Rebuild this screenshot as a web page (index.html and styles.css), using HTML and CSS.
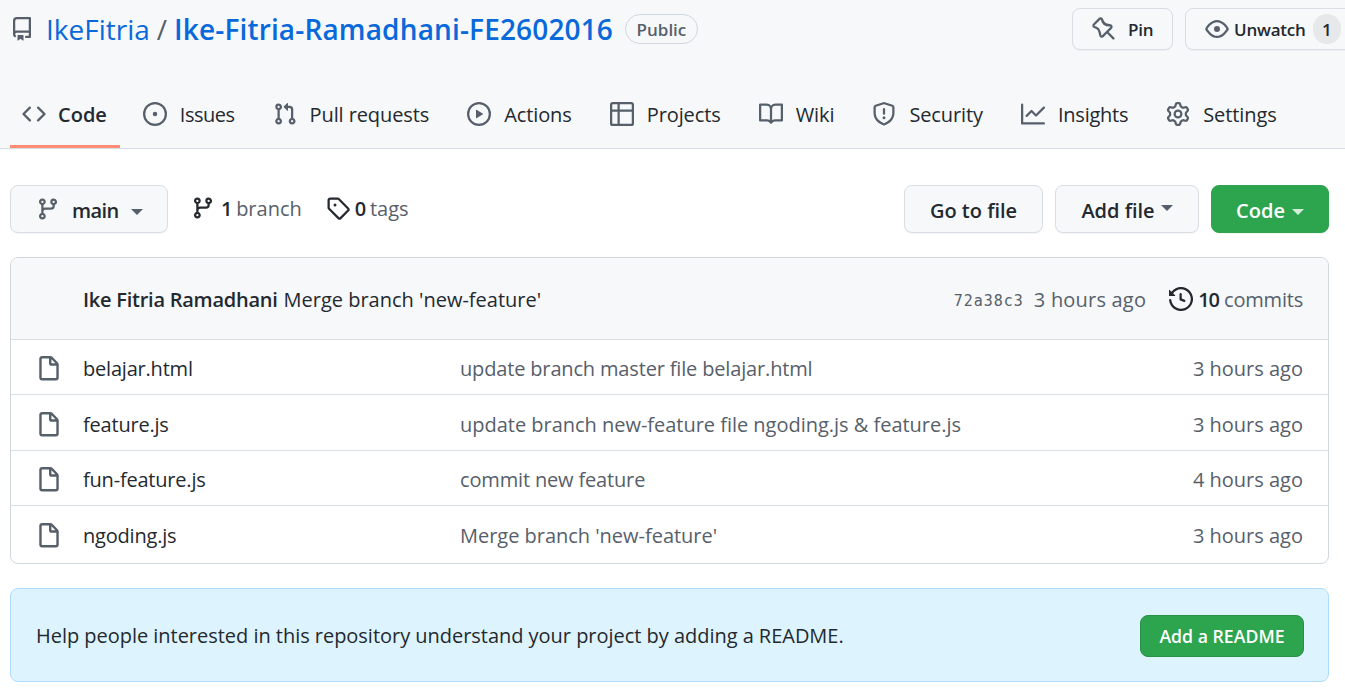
FILE: index.html
```html
<!DOCTYPE html>
<html lang="en">
<head>
<meta charset="utf-8">
<title>IkeFitria/Ike-Fitria-Ramadhani-FE2602016</title>
<link rel="stylesheet" href="styles.css">
</head>
<body>
<svg class="sprite" aria-hidden="true">
<symbol id="i-repo" viewBox="0 0 16 16"><path fill-rule="evenodd" d="M2 2.5A2.5 2.5 0 014.5 0h8.75a.75.75 0 01.75.75v12.5a.75.75 0 01-.75.75h-2.5a.75.75 0 110-1.5h1.75v-2h-8a1 1 0 00-.714 1.7.75.75 0 01-1.072 1.05A2.495 2.495 0 012 11.5v-9zm10.5-1V9h-8c-.356 0-.694.074-1 .208V2.5a1 1 0 011-1h8zM5 12.25v3.25a.25.25 0 00.4.2l1.45-1.087a.25.25 0 01.3 0L8.6 15.7a.25.25 0 00.4-.2v-3.25a.25.25 0 00-.25-.25h-3.5a.25.25 0 00-.25.25z"/></symbol>
<symbol id="i-code" viewBox="0 0 16 16"><path fill-rule="evenodd" d="M4.72 3.22a.75.75 0 011.06 1.06L2.06 8l3.72 3.72a.75.75 0 11-1.06 1.06L.47 8.53a.75.75 0 010-1.06l4.25-4.25zm6.56 0a.75.75 0 10-1.06 1.06L13.94 8l-3.72 3.72a.75.75 0 101.06 1.06l4.25-4.25a.75.75 0 000-1.06l-4.25-4.25z"/></symbol>
<symbol id="i-issue" viewBox="0 0 16 16"><path d="M8 9.5a1.5 1.5 0 100-3 1.5 1.5 0 000 3z"/><path fill-rule="evenodd" d="M8 0a8 8 0 100 16A8 8 0 008 0zM1.5 8a6.5 6.5 0 1113 0 6.5 6.5 0 01-13 0z"/></symbol>
<symbol id="i-pr" viewBox="0 0 16 16"><path fill-rule="evenodd" d="M7.177 3.073L9.573.677A.25.25 0 0110 .854v4.792a.25.25 0 01-.427.177L7.177 3.427a.25.25 0 010-.354zM3.75 2.5a.75.75 0 100 1.5.75.75 0 000-1.5zm-2.25.75a2.25 2.25 0 113 2.122v5.256a2.251 2.251 0 11-1.5 0V5.372A2.25 2.25 0 011.5 3.25zM11 2.5h-1V4h1a1 1 0 011 1v5.628a2.251 2.251 0 101.5 0V5A2.5 2.5 0 0011 2.5zm1 10.25a.75.75 0 111.5 0 .75.75 0 01-1.5 0zM3.75 12a.75.75 0 100 1.5.75.75 0 000-1.5z"/></symbol>
<symbol id="i-play" viewBox="0 0 16 16"><path fill-rule="evenodd" d="M1.5 8a6.5 6.5 0 1113 0 6.5 6.5 0 01-13 0zM8 0a8 8 0 100 16A8 8 0 008 0zM6.379 5.227A.25.25 0 006 5.442v5.117a.25.25 0 00.379.214l4.264-2.559a.25.25 0 000-.428L6.379 5.227z"/></symbol>
<symbol id="i-table" viewBox="0 0 16 16"><path fill-rule="evenodd" d="M0 1.75C0 .784.784 0 1.75 0h12.5C15.216 0 16 .784 16 1.75v12.5A1.75 1.75 0 0114.25 16H1.75A1.75 1.75 0 010 14.25V1.75zM1.5 6.5v7.75c0 .138.112.25.25.25H5v-8H1.5zM5 5H1.5V1.75a.25.25 0 01.25-.25H5V5zm1.5 1.5v8h7.75a.25.25 0 00.25-.25V6.5h-8zm8-1.5h-8V1.5h7.75a.25.25 0 01.25.25V5z"/></symbol>
<symbol id="i-book" viewBox="0 0 16 16"><path fill-rule="evenodd" d="M0 1.75A.75.75 0 01.75 1h4.253c1.227 0 2.317.59 3 1.501A3.744 3.744 0 0111.006 1h4.245a.75.75 0 01.75.75v10.5a.75.75 0 01-.75.75h-4.507a2.25 2.25 0 00-1.591.659l-.622.621a.75.75 0 01-1.06 0l-.622-.621A2.25 2.25 0 005.258 13H.75a.75.75 0 01-.75-.75V1.75zm8.755 3a2.25 2.25 0 012.25-2.25H14.5v9h-3.757c-.71 0-1.4.201-1.992.572l.004-7.322zm-1.504 7.324l.004-5.073-.002-2.253A2.25 2.25 0 005.003 2.5H1.5v9h3.757a3.75 3.75 0 011.994.574z"/></symbol>
<symbol id="i-shield" viewBox="0 0 16 16"><path fill-rule="evenodd" d="M7.467.133a1.75 1.75 0 011.066 0l5.25 1.68A1.75 1.75 0 0115 3.48V7c0 1.566-.32 3.182-1.303 4.682-.983 1.498-2.585 2.813-5.032 3.855a1.7 1.7 0 01-1.33 0c-2.447-1.042-4.049-2.357-5.032-3.855C1.32 10.182 1 8.566 1 7V3.48a1.75 1.75 0 011.217-1.667l5.25-1.68zm.61 1.429a.25.25 0 00-.153 0l-5.25 1.68a.25.25 0 00-.174.238V7c0 1.358.275 2.666 1.057 3.86.784 1.194 2.121 2.34 4.366 3.297a.2.2 0 00.154 0c2.245-.956 3.582-2.104 4.366-3.298C13.225 9.666 13.5 8.36 13.5 7V3.48a.25.25 0 00-.174-.237l-5.25-1.68zM9 10.5a1 1 0 11-2 0 1 1 0 012 0zm-.25-5.75a.75.75 0 10-1.5 0v3a.75.75 0 001.5 0v-3z"/></symbol>
<symbol id="i-graph" viewBox="0 0 16 16"><path fill-rule="evenodd" d="M1.5 1.75a.75.75 0 00-1.5 0v12.5c0 .414.336.75.75.75h14.5a.75.75 0 000-1.5H1.5V1.75zm14.28 2.53a.75.75 0 00-1.06-1.06L10 7.94 7.53 5.47a.75.75 0 00-1.06 0L3.22 8.72a.75.75 0 001.06 1.06L7 7.06l2.47 2.47a.75.75 0 001.06 0l5.25-5.25z"/></symbol>
<symbol id="i-gear" viewBox="0 0 16 16"><path fill-rule="evenodd" d="M7.429 1.525a6.593 6.593 0 011.142 0c.036.003.108.036.137.146l.289 1.105c.147.56.55.967.997 1.189.174.086.341.183.501.29.417.278.97.423 1.53.27l1.102-.303c.11-.03.175.016.195.046.219.31.41.641.573.989.014.031.022.11-.059.19l-.815.806c-.411.406-.562.957-.53 1.456a4.588 4.588 0 010 .582c-.032.499.119 1.05.53 1.456l.815.806c.08.08.073.159.059.19a6.494 6.494 0 01-.573.99c-.02.029-.086.074-.195.045l-1.103-.303c-.559-.153-1.112-.008-1.529.27-.16.107-.327.204-.5.29-.449.222-.851.628-.998 1.189l-.289 1.105c-.029.11-.101.143-.137.146a6.613 6.613 0 01-1.142 0c-.036-.003-.108-.037-.137-.146l-.289-1.105c-.147-.56-.55-.967-.997-1.189a4.502 4.502 0 01-.501-.29c-.417-.278-.97-.423-1.53-.27l-1.102.303c-.11.03-.175-.016-.195-.046a6.492 6.492 0 01-.573-.989c-.014-.031-.022-.11.059-.19l.815-.806c.411-.406.562-.957.53-1.456a4.587 4.587 0 010-.582c.032-.499-.119-1.05-.53-1.456l-.815-.806c-.08-.08-.073-.159-.059-.19a6.44 6.44 0 01.573-.99c.02-.029.086-.075.195-.045l1.103.303c.559.153 1.112.008 1.529-.27.16-.107.327-.204.5-.29.449-.222.851-.628.998-1.189l.289-1.105c.029-.11.101-.143.137-.146zM8 0c-.236 0-.47.01-.701.03-.743.065-1.29.615-1.458 1.261l-.29 1.106c-.017.066-.078.158-.211.224a5.994 5.994 0 00-.668.386c-.123.082-.233.09-.3.071L3.27 2.776c-.644-.177-1.392.02-1.82.63a7.977 7.977 0 00-.704 1.217c-.315.675-.111 1.422.363 1.891l.815.806c.05.048.098.147.088.294a6.084 6.084 0 000 .772c.01.147-.038.246-.088.294l-.815.806c-.474.469-.678 1.216-.363 1.891.2.428.436.835.704 1.218.428.609 1.176.806 1.82.63l1.103-.303c.066-.019.176-.011.299.071.213.143.436.272.668.386.133.066.194.158.212.224l.289 1.106c.169.646.715 1.196 1.458 1.26a8.094 8.094 0 001.402 0c.743-.064 1.29-.614 1.458-1.26l.29-1.106c.017-.066.078-.158.211-.224a5.98 5.98 0 00.668-.386c.123-.082.233-.09.3-.071l1.102.302c.644.177 1.392-.02 1.82-.63.268-.382.505-.789.704-1.217.315-.675.111-1.422-.364-1.891l-.814-.806c-.05-.048-.098-.147-.088-.294a6.1 6.1 0 000-.772c-.01-.147.039-.246.088-.294l.814-.806c.475-.469.679-1.216.364-1.891a7.992 7.992 0 00-.704-1.218c-.428-.609-1.176-.806-1.82-.63l-1.103.303c-.066.019-.176.011-.299-.071a5.991 5.991 0 00-.668-.386c-.133-.066-.194-.158-.212-.224L10.16 1.29C9.99.645 9.444.095 8.701.031A8.094 8.094 0 008 0zm1.5 8a1.5 1.5 0 11-3 0 1.5 1.5 0 013 0zM11 8a3 3 0 11-6 0 3 3 0 016 0z"/></symbol>
<symbol id="i-pin" viewBox="0 0 16 16"><path fill-rule="evenodd" d="M4.456.734a1.75 1.75 0 012.826.504l.613 1.327a3.081 3.081 0 002.084 1.707l2.454.584c1.332.317 1.8 1.972.832 2.94L11.06 10l3.72 3.72a.75.75 0 11-1.06 1.06L10 11.06l-2.204 2.205c-.968.968-2.623.5-2.94-.832l-.584-2.454a3.081 3.081 0 00-1.707-2.084l-1.327-.613a1.75 1.75 0 01-.504-2.826L4.456.734zM5.92 1.866a.25.25 0 00-.404-.072L1.794 5.516a.25.25 0 00.072.404l1.328.613A4.582 4.582 0 015.73 9.63l.584 2.454a.25.25 0 00.42.12l5.47-5.47a.25.25 0 00-.12-.42L9.63 6.23a4.581 4.581 0 01-3.098-2.537L5.92 1.866z"/></symbol>
<symbol id="i-eye" viewBox="0 0 16 16"><path fill-rule="evenodd" d="M1.679 7.932c.412-.621 1.242-1.75 2.366-2.717C5.175 4.242 6.527 3.5 8 3.5c1.473 0 2.824.742 3.955 1.715 1.124.967 1.954 2.096 2.366 2.717a.119.119 0 010 .136c-.412.621-1.242 1.75-2.366 2.717C10.825 11.758 9.473 12.5 8 12.5c-1.473 0-2.824-.742-3.955-1.715C2.92 9.818 2.09 8.69 1.679 8.068a.119.119 0 010-.136zM8 2c-1.981 0-3.67.992-4.933 2.078C1.797 5.169.88 6.423.43 7.1a1.619 1.619 0 000 1.798c.45.678 1.367 1.932 2.637 3.024C4.329 13.008 6.019 14 8 14c1.981 0 3.67-.992 4.933-2.078 1.27-1.091 2.187-2.345 2.637-3.023a1.619 1.619 0 000-1.798c-.45-.678-1.367-1.932-2.637-3.023C11.671 2.992 9.981 2 8 2zm0 8a2 2 0 100-4 2 2 0 000 4z"/></symbol>
<symbol id="i-branch" viewBox="0 0 16 16"><path fill-rule="evenodd" d="M11.75 2.5a.75.75 0 100 1.5.75.75 0 000-1.5zm-2.25.75a2.25 2.25 0 113 2.122V6A2.5 2.5 0 0110 8.5H6a1 1 0 00-1 1v1.128a2.251 2.251 0 11-1.5 0V5.372a2.25 2.25 0 111.5 0v1.836A2.492 2.492 0 016 7h4a1 1 0 001-1v-.628A2.25 2.25 0 019.5 3.25zM4.25 12a.75.75 0 100 1.5.75.75 0 000-1.5zM3.5 3.25a.75.75 0 111.5 0 .75.75 0 01-1.5 0z"/></symbol>
<symbol id="i-tag" viewBox="0 0 16 16"><path fill-rule="evenodd" d="M2.5 7.775V2.75a.25.25 0 01.25-.25h5.025a.25.25 0 01.177.073l6.25 6.25a.25.25 0 010 .354l-5.025 5.025a.25.25 0 01-.354 0l-6.25-6.25a.25.25 0 01-.073-.177zm-1.5 0V2.75C1 1.784 1.784 1 2.75 1h5.025c.464 0 .91.184 1.238.513l6.25 6.25a1.75 1.75 0 010 2.474l-5.026 5.026a1.75 1.75 0 01-2.474 0l-6.25-6.25A1.75 1.75 0 011 7.775zM6 5a1 1 0 100 2 1 1 0 000-2z"/></symbol>
<symbol id="i-history" viewBox="0 0 16 16"><path fill-rule="evenodd" d="M1.643 3.143L.427 1.927A.25.25 0 000 2.104V5.75c0 .138.112.25.25.25h3.646a.25.25 0 00.177-.427L2.715 4.215a6.5 6.5 0 11-1.18 4.458.75.75 0 10-1.493.154 8.001 8.001 0 101.6-5.684zM7.75 4a.75.75 0 01.75.75v2.992l2.028.812a.75.75 0 01-.557 1.392l-2.5-1A.75.75 0 017 8.25v-3.5A.75.75 0 017.75 4z"/></symbol>
<symbol id="i-file" viewBox="0 0 16 16"><path fill-rule="evenodd" d="M3.75 1.5a.25.25 0 00-.25.25v11.5c0 .138.112.25.25.25h8.5a.25.25 0 00.25-.25V6H9.75A1.75 1.75 0 018 4.25V1.5H3.75zm5.75.56v2.19c0 .138.112.25.25.25h2.19L9.5 2.06zM2 1.75C2 .784 2.784 0 3.75 0h5.086c.464 0 .909.184 1.237.513l3.414 3.414c.329.328.513.773.513 1.237v8.086A1.75 1.75 0 0112.25 15h-8.5A1.75 1.75 0 012 13.25V1.75z"/></symbol>
</svg>

<header class="repo-head">
  <div class="title-row">
    <div class="title">
      <svg class="ico ico-repo"><use href="#i-repo"/></svg>
      <a class="owner">IkeFitria</a>
      <span class="slash">/</span>
      <a class="name">Ike-Fitria-Ramadhani-FE2602016</a>
      <span class="label">Public</span>
    </div>
    <div class="actions">
      <span class="hbtn hbtn-pin"><svg class="ico ico-pin"><use href="#i-pin"/></svg>Pin</span>
      <span class="hbtn hbtn-watch"><svg class="ico ico-eye"><use href="#i-eye"/></svg>Unwatch<span class="count">1</span></span>
    </div>
  </div>
  <nav class="tabs">
    <a class="tab tab-active"><svg class="ico"><use href="#i-code"/></svg>Code</a>
    <a class="tab tab-issues"><svg class="ico"><use href="#i-issue"/></svg>Issues</a>
    <a class="tab"><svg class="ico"><use href="#i-pr"/></svg>Pull requests</a>
    <a class="tab"><svg class="ico"><use href="#i-play"/></svg>Actions</a>
    <a class="tab"><svg class="ico"><use href="#i-table"/></svg>Projects</a>
    <a class="tab"><svg class="ico"><use href="#i-book"/></svg>Wiki</a>
    <a class="tab"><svg class="ico"><use href="#i-shield"/></svg>Security</a>
    <a class="tab tab-insights"><svg class="ico"><use href="#i-graph"/></svg>Insights</a>
    <a class="tab"><svg class="ico"><use href="#i-gear"/></svg>Settings</a>
  </nav>
</header>

<main class="main">
  <div class="toolbar">
    <span class="btn btn-branch"><svg class="ico"><use href="#i-branch"/></svg><b>main</b><i class="caret"></i></span>
    <span class="stat stat-branch"><svg class="ico ico-dark"><use href="#i-branch"/></svg><b>1</b> branch</span>
    <span class="stat stat-tags"><svg class="ico ico-dark"><use href="#i-tag"/></svg><b>0</b> tags</span>
    <span class="spacer"></span>
    <span class="btn btn-goto">Go to file</span>
    <span class="btn btn-add">Add file<i class="caret caret-up"></i></span>
    <span class="btn btn-code">Code<i class="caret caret-light"></i></span>
  </div>

  <section class="box">
    <div class="commit">
      <span class="author">Ike Fitria Ramadhani</span>
      <span class="commit-msg">Merge branch 'new-feature'</span>
      <span class="spacer"></span>
      <span class="sha">72a38c3</span>
      <span class="muted commit-age">3 hours ago</span>
      <span class="commits"><svg class="ico ico-hist"><use href="#i-history"/></svg><b>10</b> commits</span>
    </div>
    <div class="row row-a"><svg class="ico ico-file"><use href="#i-file"/></svg><span class="fname">belajar.html</span><span class="msg">update branch master file belajar.html</span><span class="age">3 hours ago</span></div>
    <div class="row row-b"><svg class="ico ico-file"><use href="#i-file"/></svg><span class="fname">feature.js</span><span class="msg">update branch new-feature file ngoding.js &amp; feature.js</span><span class="age">3 hours ago</span></div>
    <div class="row row-a"><svg class="ico ico-file"><use href="#i-file"/></svg><span class="fname">fun-feature.js</span><span class="msg">commit new feature</span><span class="age">4 hours ago</span></div>
    <div class="row row-c"><svg class="ico ico-file"><use href="#i-file"/></svg><span class="fname">ngoding.js</span><span class="msg">Merge branch 'new-feature'</span><span class="age">3 hours ago</span></div>
  </section>

  <section class="banner">
    <span class="banner-text">Help people interested in this repository understand your project by adding a README.</span>
    <span class="btn-readme">Add a README</span>
  </section>
</main>
</body>
</html>
```
FILE: styles.css
```css
* { box-sizing: border-box; }
html, body { margin: 0; height: 700px; overflow: hidden; background: #fff; }
body { font-family: "Open Sans", "Noto Sans", sans-serif; color: #24292f; font-size: 20px; }
.sprite { display: none; }
.ico { width: 24px; height: 24px; fill: #57606a; flex: none; display: block; }
.ico-dark { fill: #24292f; }

.repo-head { background: #f6f8fa; height: 149px; border-bottom: 1px solid #d8dee4; }
.title-row { display: flex; justify-content: space-between; height: 83px; padding: 8px 0 0 10px; }
.title { display: flex; align-items: center; height: 42px; font-size: 28px; white-space: nowrap; }
.ico-repo { margin-top: -1px; }
.owner { color: #0969da; margin-left: 12px; }
.slash { color: #57606a; margin: 0 7px; }
.name { color: #0969da; font-weight: 600; letter-spacing: .15px; }
.label { margin-left: 12px; height: 30px; padding: 0 10.5px; display: flex; align-items: center; border: 1px solid #d0d7de; border-radius: 15px; color: #57606a; font-size: 17px; font-weight: 600; }
.actions { display: flex; gap: 12px; margin-right: -10px; }
.hbtn { display: flex; align-items: center; height: 42px; background: #f6f8fa; border: 1px solid #d8dee4; border-radius: 8px; font-size: 17px; font-weight: 600; letter-spacing: -.2px; color: #24292f; box-shadow: 0 1px 0 rgba(27,31,36,.04); }
.hbtn-pin { width: 101px; padding-left: 19px; }
.ico-pin { margin-right: 12px; }
.hbtn-watch { width: 170px; padding-left: 19px; }
.ico-eye { margin-right: 5px; }
.count { margin-left: 7px; width: 28px; height: 30px; background: #e6e8ea; border-radius: 15px; display: flex; align-items: center; justify-content: center; }

.tabs { display: flex; gap: 14px; padding-left: 10px; height: 65px; }
.tab { display: flex; align-items: center; gap: 13px; padding: 0 12px; height: 65px; font-size: 20px; letter-spacing: -.1px; color: #24292f; border-bottom: 3px solid transparent; white-space: nowrap; }
.tab-active { font-weight: 600; letter-spacing: 0; border-bottom-color: #fd8c73; gap: 12px; padding-right: 13px; margin-right: -3px; }
.tab-issues { letter-spacing: -.5px; }
.tab-insights { letter-spacing: -.25px; }

.main { padding: 36px 16px 0 10px; }
.toolbar { display: flex; align-items: center; height: 48px; }
.spacer { flex: 1; }
.btn { display: flex; align-items: center; height: 48px; border: 1px solid #d8dee4; border-radius: 8px; background: #f6f8fa; font-size: 20px; font-weight: 600; color: #24292f; justify-content: center; box-shadow: 0 1px 0 rgba(27,31,36,.04); padding-top: 2px; }
.btn-branch { width: 158px; gap: 12px; justify-content: flex-start; padding-left: 25px; }
.btn-branch b { font-weight: 600; letter-spacing: -.6px; }
.btn-goto { width: 139px; }
.btn-add { width: 144px; margin-left: 12px; gap: 6px; }
.btn-code { width: 118px; margin-left: 12px; background: #2da44e; color: #fff; border-color: #2da44e; gap: 7px; }
.caret { width: 0; height: 0; border: 6.5px solid transparent; border-top-color: #57606a; border-bottom: 0; display: block; margin-top: 3px; }
.btn .ico { margin-top: -2px; }
.caret-up { margin-top: -5px; }
.caret-light { border-top-color: #d5eddb; }
.stat { display: flex; align-items: center; color: #57606a; margin-top: -2px; white-space: pre; }
.stat .ico { margin-right: 6px; }
.stat b { color: #24292f; font-weight: 600; margin-right: -1.5px; }
.stat-branch { margin-left: 23px; }
.stat-tags { margin-left: 24px; }
.stat-tags .ico { margin-right: 5px; }

.box { margin-top: 24px; border: 1px solid #d0d7de; border-radius: 8px; height: 307px; overflow: hidden; }
.commit { display: flex; align-items: center; height: 82px; padding: 2px 25px 0 72px; background: #f6f8fa; border-bottom: 1px solid #d8dee4; white-space: nowrap; }
.author { font-weight: 600; letter-spacing: -.25px; }
.commit-msg { margin-left: 6px; }
.sha { font-family: "DejaVu Sans Mono", monospace; font-size: 15px; letter-spacing: 1px; color: #57606a; margin-top: 2px; }
.commit-age { margin-left: 10px; letter-spacing: .2px; }
.muted { color: #57606a; }
.commits { display: flex; align-items: center; margin-left: 23px; color: #57606a; white-space: pre; letter-spacing: -.2px; }
.commits b { color: #24292f; font-weight: 600; letter-spacing: -1px; }
.ico-hist { fill: #24292f; margin-right: 5px; margin-top: -2px; }

.row { display: flex; align-items: center; padding: 2px 25px 0; border-bottom: 1px solid #d8dee4; white-space: nowrap; }
.row-a { height: 55px; }
.row-b { height: 56px; padding-top: 3px; }
.row-c { height: 58px; border-bottom: 0; padding-top: 0; }
.ico-file { width: 26px; height: 26px; margin-top: 2px; }
.fname { width: 377px; margin-left: 21px; letter-spacing: -.2px; }
.msg { flex: 1; color: #57606a; letter-spacing: -.02px; }
.row-a .msg { letter-spacing: -.16px; }
.age { color: #57606a; }

.banner { margin-top: 24px; height: 94px; display: flex; align-items: center; justify-content: space-between; padding: 0 24px 0 25px; background: #ddf4ff; border: 1px solid #aedcff; border-radius: 8px; }
.banner-text { white-space: nowrap; letter-spacing: -.03px; }
.btn-readme { width: 164px; height: 42px; margin-top: 2px; display: flex; align-items: center; justify-content: center; background: #2da44e; border: 1px solid #2a8f47; border-radius: 8px; color: #fff; font-size: 17.7px; font-weight: 600; }
```
